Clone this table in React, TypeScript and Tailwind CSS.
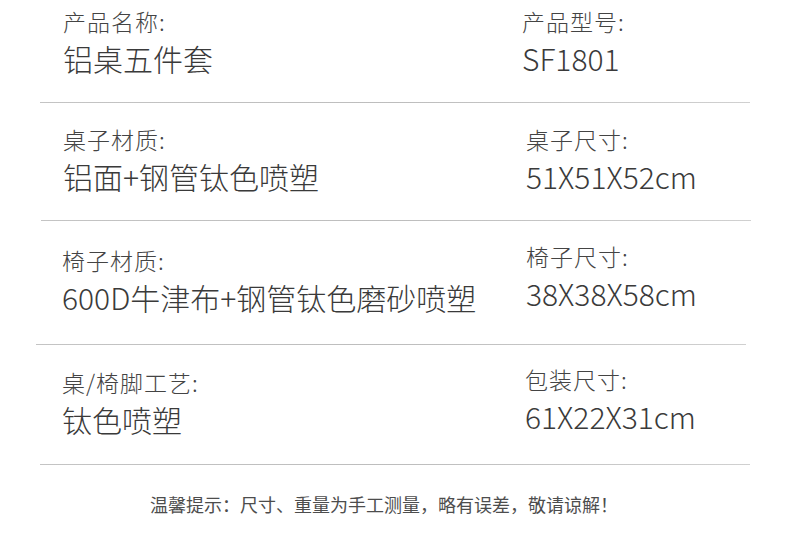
const FONT = "font-['Noto_Sans_CJK_SC','Noto_Sans',sans-serif]";

type Spec = {
  label: string;
  value: string;
  right: { label: string; value: string };
  pt: string;
  pb: string;
  leftW: string;
  rightShift?: string;
  line: string;
};

const ROWS: Spec[] = [
  {
    label: "产品名称:",
    value: "铝桌五件套",
    right: { label: "产品型号:", value: "SF1801" },
    pt: "pt-[7px]",
    pb: "pb-[24px]",
    leftW: "w-[522px] pl-[63px]",
    line: "ml-[40px] w-[710px]",
  },
  {
    label: "桌子材质:",
    value: "铝面+钢管钛色喷塑",
    right: { label: "桌子尺寸:", value: "51X51X52cm" },
    pt: "pt-[22px]",
    pb: "pb-[24px]",
    leftW: "w-[526px] pl-[63px]",
    line: "ml-[41px] w-[710px]",
  },
  {
    label: "椅子材质:",
    value: "600D牛津布+钢管钛色磨砂喷塑",
    right: { label: "椅子尺寸:", value: "38X38X58cm" },
    pt: "pt-[25px]",
    pb: "pb-[27px]",
    leftW: "w-[526px] pl-[62px]",
    rightShift: "-mt-[4px]",
    line: "ml-[36px] w-[710px]",
  },
  {
    label: "桌/椅脚工艺:",
    value: "钛色喷塑",
    right: { label: "包装尺寸:", value: "61X22X31cm" },
    pt: "pt-[23px]",
    pb: "pb-[25px]",
    leftW: "w-[525px] pl-[62px]",
    rightShift: "-mt-[3px]",
    line: "ml-[40px] w-[710px]",
  },
];

function Field({ label, value }: { label: string; value: string }) {
  return (
    <div className="flex flex-col gap-[3px]">
      <div className="text-[23px] leading-[28px] tracking-[1px] font-light text-[#444] whitespace-nowrap">
        {label}
      </div>
      <div className="text-[30px] leading-[40px] font-light text-[#3a3a3a] whitespace-nowrap">{value}</div>
    </div>
  );
}

export default function App() {
  return (
    <div className={`w-[790px] h-[544px] bg-white overflow-hidden ${FONT}`}>
      {ROWS.map((r) => (
        <div key={r.label}>
          <div className={`flex ${r.pt} ${r.pb}`}>
            <div className={`${r.leftW} shrink-0`}>
              <Field label={r.label} value={r.value} />
            </div>
            <div className={r.rightShift ?? ""}>
              <Field label={r.right.label} value={r.right.value} />
            </div>
          </div>
          <div
            className={`${r.line} h-px bg-gradient-to-r from-[#c4c4c4] via-[#bdbdbd] to-[#d0d0d0]`}
          />
        </div>
      ))}
      <div className="pt-[27px] pr-[22px] text-center text-[18px] leading-[24px] text-[#4d4d4d]">
        温馨提示：尺寸、重量为手工测量，略有误差，敬请谅解！
      </div>
    </div>
  );
}
